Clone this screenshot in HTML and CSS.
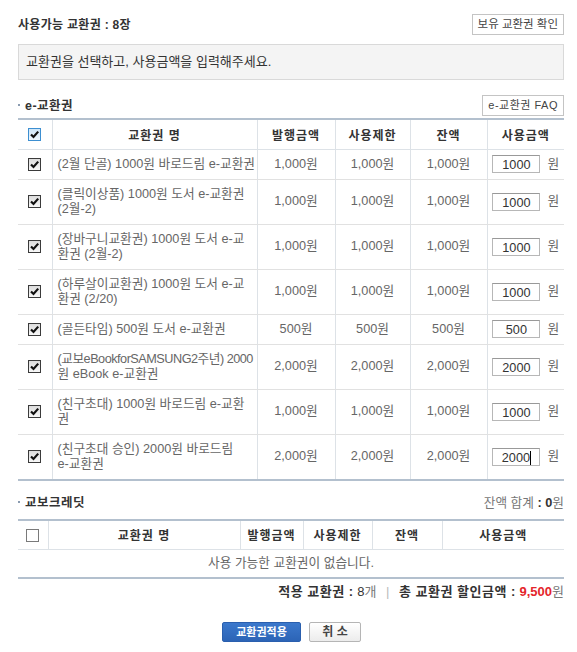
FILE: index.html
```html
<!DOCTYPE html>
<html lang="ko">
<head>
<meta charset="utf-8">
<title>교환권 사용</title>
<link rel="stylesheet" href="styles.css">
</head>
<body>
<div class="wrap">
  <div class="top">
    <h2 class="title">사용가능 교환권 : 8장</h2>
    <button class="btn-line">보유 교환권 확인</button>
  </div>
  <div class="notice">교환권을 선택하고, 사용금액을 입력해주세요.</div>

  <div class="sec-head">
    <h3 class="sec-title">e-교환권</h3>
    <button class="btn-line btn-faq">e-교환권 FAQ</button>
  </div>
  <table class="grid grid-e">
    <colgroup>
      <col class="c-chk"><col class="c-name"><col class="c-n1"><col class="c-n2"><col class="c-n3"><col class="c-amt">
    </colgroup>
    <thead>
      <tr>
        <th><span class="chk chk-on chk-focus"><svg viewBox="0 0 11 11" width="11" height="11"><path d="M2 5.5 L4.5 8 L9.2 2.6" fill="none" stroke="#111" stroke-width="2.2"/></svg></span></th>
        <th>교환권 명</th><th>발행금액</th><th>사용제한</th><th>잔액</th><th>사용금액</th>
      </tr>
    </thead>
    <tbody>
      <tr>
        <td><span class="chk chk-on"><svg viewBox="0 0 11 11" width="11" height="11"><path d="M2 5.5 L4.5 8 L9.2 2.6" fill="none" stroke="#111" stroke-width="2.2"/></svg></span></td>
        <td class="name">(2월 단골) 1000원 바로드림 e-교환권</td>
        <td>1,000원</td><td>1,000원</td><td>1,000원</td>
        <td class="amt-cell"><input class="amt" type="text" value="1000"><span class="won">원</span></td>
      </tr>
      <tr>
        <td><span class="chk chk-on"><svg viewBox="0 0 11 11" width="11" height="11"><path d="M2 5.5 L4.5 8 L9.2 2.6" fill="none" stroke="#111" stroke-width="2.2"/></svg></span></td>
        <td class="name">(클릭이상품) 1000원 도서 e-교환권<br>(2월-2)</td>
        <td>1,000원</td><td>1,000원</td><td>1,000원</td>
        <td class="amt-cell"><input class="amt" type="text" value="1000"><span class="won">원</span></td>
      </tr>
      <tr>
        <td><span class="chk chk-on"><svg viewBox="0 0 11 11" width="11" height="11"><path d="M2 5.5 L4.5 8 L9.2 2.6" fill="none" stroke="#111" stroke-width="2.2"/></svg></span></td>
        <td class="name">(장바구니교환권) 1000원 도서 e-교<br>환권 (2월-2)</td>
        <td>1,000원</td><td>1,000원</td><td>1,000원</td>
        <td class="amt-cell"><input class="amt" type="text" value="1000"><span class="won">원</span></td>
      </tr>
      <tr>
        <td><span class="chk chk-on"><svg viewBox="0 0 11 11" width="11" height="11"><path d="M2 5.5 L4.5 8 L9.2 2.6" fill="none" stroke="#111" stroke-width="2.2"/></svg></span></td>
        <td class="name">(하루살이교환권) 1000원 도서 e-교<br>환권 (2/20)</td>
        <td>1,000원</td><td>1,000원</td><td>1,000원</td>
        <td class="amt-cell"><input class="amt" type="text" value="1000"><span class="won">원</span></td>
      </tr>
      <tr>
        <td><span class="chk chk-on"><svg viewBox="0 0 11 11" width="11" height="11"><path d="M2 5.5 L4.5 8 L9.2 2.6" fill="none" stroke="#111" stroke-width="2.2"/></svg></span></td>
        <td class="name">(골든타임) 500원 도서 e-교환권</td>
        <td>500원</td><td>500원</td><td>500원</td>
        <td class="amt-cell"><input class="amt" type="text" value="500"><span class="won">원</span></td>
      </tr>
      <tr>
        <td><span class="chk chk-on"><svg viewBox="0 0 11 11" width="11" height="11"><path d="M2 5.5 L4.5 8 L9.2 2.6" fill="none" stroke="#111" stroke-width="2.2"/></svg></span></td>
        <td class="name"><span class="tight">(교보eBookforSAMSUNG2주년) 2000</span><br>원 eBook e-교환권</td>
        <td>2,000원</td><td>2,000원</td><td>2,000원</td>
        <td class="amt-cell"><input class="amt" type="text" value="2000"><span class="won">원</span></td>
      </tr>
      <tr>
        <td><span class="chk chk-on"><svg viewBox="0 0 11 11" width="11" height="11"><path d="M2 5.5 L4.5 8 L9.2 2.6" fill="none" stroke="#111" stroke-width="2.2"/></svg></span></td>
        <td class="name">(친구초대) 1000원 바로드림 e-교환<br>권</td>
        <td>1,000원</td><td>1,000원</td><td>1,000원</td>
        <td class="amt-cell"><input class="amt" type="text" value="1000"><span class="won">원</span></td>
      </tr>
      <tr>
        <td><span class="chk chk-on"><svg viewBox="0 0 11 11" width="11" height="11"><path d="M2 5.5 L4.5 8 L9.2 2.6" fill="none" stroke="#111" stroke-width="2.2"/></svg></span></td>
        <td class="name">(친구초대 승인) 2000원 바로드림<br>e-교환권</td>
        <td>2,000원</td><td>2,000원</td><td>2,000원</td>
        <td class="amt-cell"><span class="amt">2000<i class="caret"></i></span><span class="won">원</span></td>
      </tr>
    </tbody>
  </table>

  <div class="sec-head sec-head-2">
    <h3 class="sec-title">교보크레딧</h3>
    <p class="sum-small">잔액 합계 <b>: 0</b>원</p>
  </div>
  <table class="grid grid-c">
    <colgroup>
      <col class="k-chk"><col class="k-name"><col class="k-n1"><col class="k-n2"><col class="k-n3"><col class="k-amt">
    </colgroup>
    <thead>
      <tr>
        <th><span class="chk"></span></th>
        <th>교환권 명</th><th>발행금액</th><th>사용제한</th><th>잔액</th><th>사용금액</th>
      </tr>
    </thead>
    <tbody>
      <tr><td class="empty" colspan="6">사용 가능한 교환권이 없습니다.</td></tr>
    </tbody>
  </table>

  <p class="total"><b>적용 교환권 :</b> <strong>8</strong>개 <span class="bar">|</span> <b>총 교환권 할인금액 :</b> <strong class="red">9,500</strong>원</p>

  <div class="actions">
    <button class="btn-primary">교환권적용</button>
    <button class="btn-cancel">취 소</button>
  </div>
</div>
</body>
</html>
```

FILE: styles.css
```css
* { box-sizing: border-box; }
html, body { margin: 0; padding: 0; background: #fff; }
body {
  font-family: "Liberation Sans", "Noto Sans CJK KR", sans-serif;
  font-size: 12.7px;
  color: #666;
}
.wrap { padding: 14px 13px 0 18px; }

.top {
  display: flex;
  justify-content: space-between;
  align-items: center;
  height: 21px;
}
.title {
  margin: 0;
  font-size: 12px;
  line-height: 16px;
  font-weight: bold;
  color: #333;
  letter-spacing: 0.3px;
}
.btn-line {
  height: 21px;
  padding: 0 5px;
  border: 1px solid #c4c4c4;
  background: #fff;
  font-family: inherit;
  font-size: 11.5px;
  line-height: 19px;
  color: #444;
  letter-spacing: 0;
}
.btn-faq { font-size: 11px; padding: 0 5px; letter-spacing: 0.5px; }

.notice {
  margin-top: 9px;
  border: 1px solid #d9d9d9;
  background: #f4f4f4;
  padding: 9px 7px;
  line-height: 16px;
  font-size: 13px;
  color: #333;
}

.sec-head {
  margin-top: 15px;
  margin-bottom: 2px;
  display: flex;
  justify-content: space-between;
  align-items: center;
  height: 21px;
}
.sec-head-2 { margin-top: 12px; margin-bottom: 5px; }
.sec-title {
  margin: 0;
  padding-left: 7px;
  position: relative;
  font-size: 12.5px;
  line-height: 16px;
  font-weight: bold;
  color: #333;
  letter-spacing: 0.5px;
}
.sec-title::before {
  content: "";
  position: absolute;
  left: 0;
  top: 6px;
  width: 2px;
  height: 2px;
  background: #8a9bb0;
}
.sum-small { margin: 0; line-height: 16px; color: #777; }
.sum-small b { color: #333; }

.grid {
  width: 100%;
  border-collapse: collapse;
  table-layout: fixed;
}
.grid th {
  height: 30px;
  padding: 0;
  font-size: 12px;
  font-weight: bold;
  color: #333;
  letter-spacing: 1px;
  text-align: center;
  border-top: 2px solid #b3c0ce;
  border-bottom: 1px solid #dde2e7;
  border-left: 1px solid #dde2e7;
}
.grid td {
  padding: 7px 0;
  line-height: 15px;
  text-align: center;
  border-bottom: 1px solid #e1e1e1;
  border-left: 1px solid #dde2e7;
  vertical-align: middle;
}
.grid th:first-child, .grid td:first-child { border-left: none; }
.grid tbody tr:last-child td { border-bottom: 2px solid #b3c0ce; }
.grid td.name {
  text-align: left;
  padding-left: 5px;
  white-space: nowrap;
}
.tight { letter-spacing: -0.5px; }
.grid td.amt-cell { padding: 3px 0; white-space: nowrap; }
.grid td.empty { border-left: none; padding: 6px 0; }

.c-chk { width: 34px; }
.c-name { width: 205px; }
.c-n1 { width: 78px; }
.c-n2 { width: 75px; }
.c-n3 { width: 77px; }
.c-amt { width: 77px; }

.k-chk { width: 30px; }
.k-name { width: 192px; }
.k-n1 { width: 63px; }
.k-n2 { width: 69px; }
.k-n3 { width: 70px; }
.k-amt { width: 122px; }

.chk {
  display: inline-flex;
  align-items: center;
  justify-content: center;
  width: 13px;
  height: 13px;
  border: 1px solid #7a7a7a;
  background: #fff;
  vertical-align: middle;
}
.chk-on {
  border-color: #3b3b3b;
  background: linear-gradient(#dcdcdc, #f8f8f8);
}
.chk-focus {
  border-color: #3d8fd1;
  background: linear-gradient(#cfe6f8, #eef7ff);
}

.amt {
  display: inline-block;
  width: 48px;
  height: 18px;
  margin: 0;
  padding: 2px 0 0;
  border: 1px solid #b7b7b7;
  border-top-color: #999;
  background: #fff;
  font-family: inherit;
  font-size: 12.7px;
  line-height: 14px;
  color: #333;
  text-align: center;
  vertical-align: middle;
}
.caret {
  display: inline-block;
  width: 1px;
  height: 14px;
  background: #000;
  vertical-align: top;
}
.won { margin-left: 7px; vertical-align: middle; }

.total {
  margin: 5px 0 0;
  text-align: right;
  line-height: 16px;
  font-size: 13px;
  color: #777;
}
.total b { color: #333; letter-spacing: 0.5px; }
.total strong { color: #333; font-weight: normal; }
.total .red { color: #e4252b; font-weight: bold; }
.bar { color: #bbb; margin: 0 6px; }

.actions {
  margin-top: 22px;
  display: flex;
  justify-content: center;
  gap: 8px;
  padding-left: 1px;
  padding-bottom: 11px;
}
.btn-primary {
  width: 79px;
  height: 20px;
  border: 1px solid #2a5fae;
  border-radius: 2px;
  background: linear-gradient(#3b78cc, #2c64b6);
  color: #fff;
  font-family: inherit;
  font-size: 11px;
  font-weight: bold;
  line-height: 18px;
  padding: 0;
}
.btn-cancel {
  width: 52px;
  height: 20px;
  border: 1px solid #b5b5b5;
  border-radius: 2px;
  background: linear-gradient(#fff, #ececec);
  color: #444;
  font-family: inherit;
  font-size: 12px;
  font-weight: bold;
  line-height: 18px;
  padding: 0;
}
```
